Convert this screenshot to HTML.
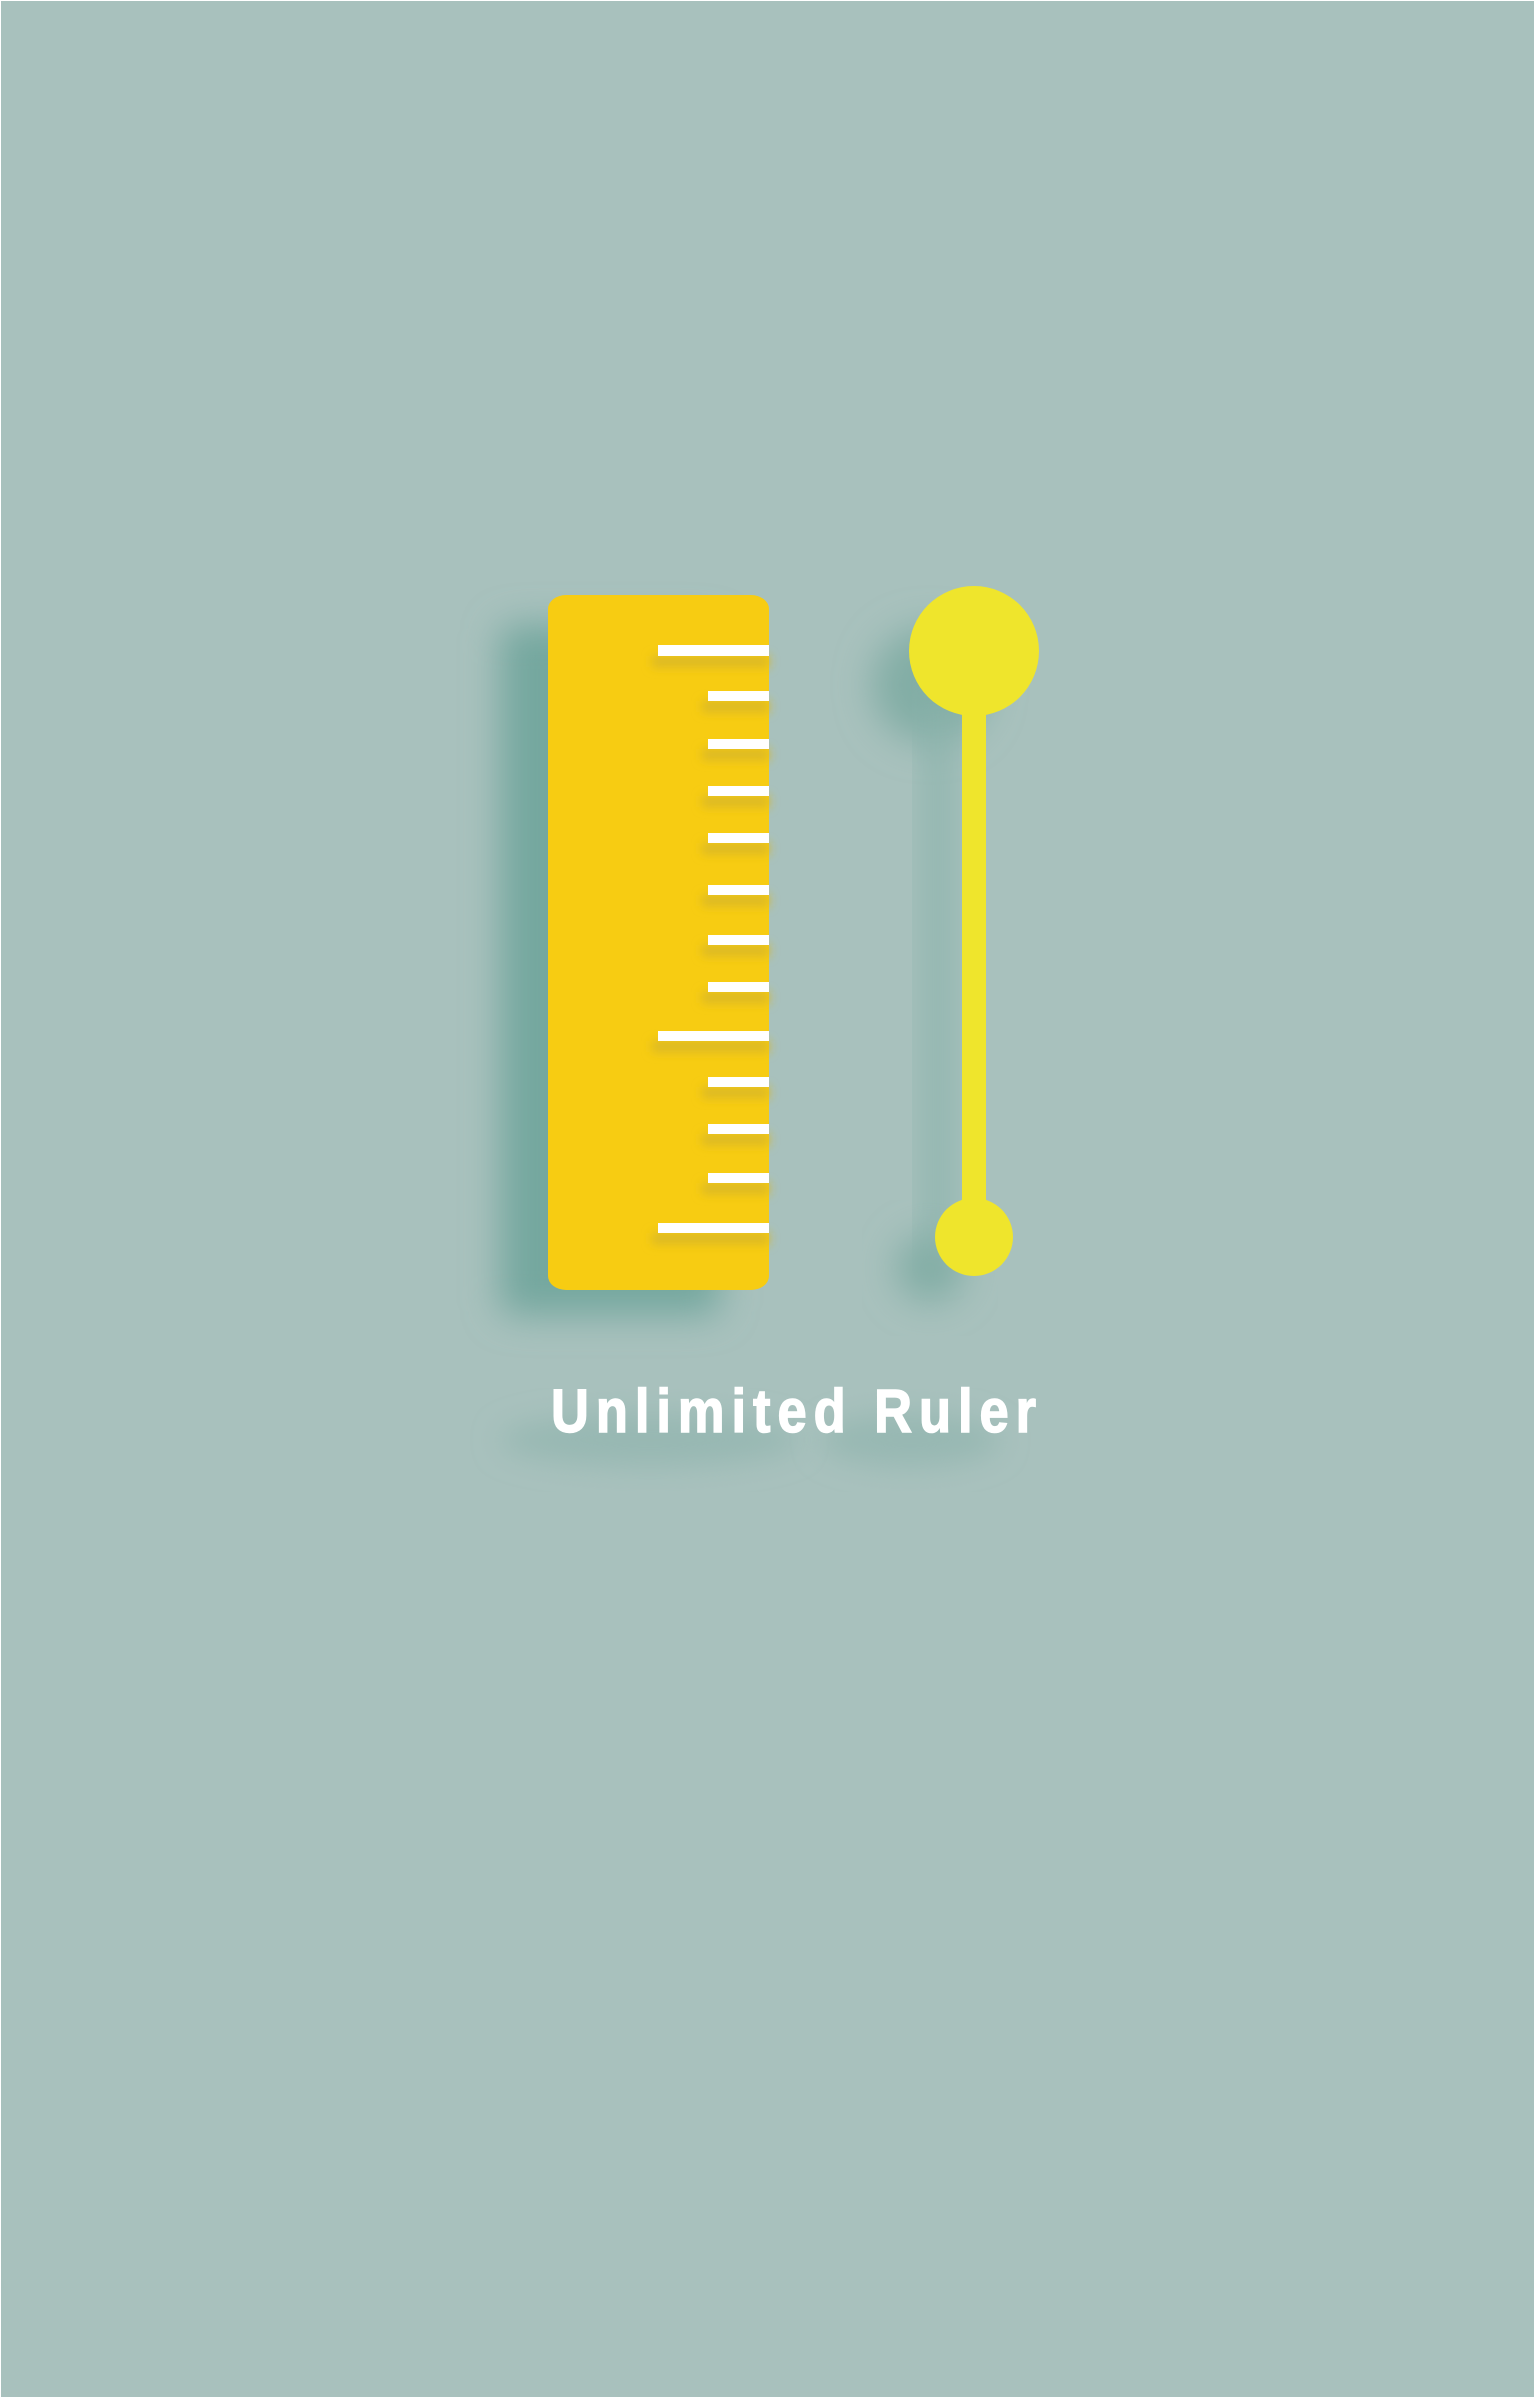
<!DOCTYPE html>
<html><head><meta charset="utf-8"><style>
html,body{margin:0;padding:0}
body{width:1536px;height:2400px;background:#fff;overflow:hidden}
</style></head><body>
<svg width="1536" height="2400" viewBox="0 0 1536 2400" xmlns="http://www.w3.org/2000/svg">
<defs>
<filter id="b1" x="-50%" y="-50%" width="200%" height="200%"><feGaussianBlur stdDeviation="18"/></filter>
<filter id="b2" x="-50%" y="-50%" width="200%" height="200%"><feGaussianBlur stdDeviation="5"/></filter>
<filter id="b3" x="-50%" y="-50%" width="200%" height="200%"><feGaussianBlur stdDeviation="14"/></filter>
</defs>
<rect x="1" y="1" width="1533" height="2396" fill="#a8c1bd"/>
<!-- shadows -->
<rect x="500" y="625" width="220" height="690" rx="14" fill="#74a79f" filter="url(#b1)"/>
<circle cx="930" cy="685" r="58" fill="#82ada5" filter="url(#b1)"/>
<rect x="925" y="700" width="26" height="560" fill="#8ab2ab" filter="url(#b1)"/>
<circle cx="930" cy="1268" r="34" fill="#82ada5" filter="url(#b1)"/>
<ellipse cx="650" cy="1440" rx="150" ry="26" fill="#97b8b2" filter="url(#b3)"/>
<ellipse cx="910" cy="1440" rx="90" ry="26" fill="#97b8b2" filter="url(#b3)"/>
<!-- ruler -->
<rect x="548" y="595" width="221" height="695" rx="18" ry="14" fill="#f7cc12"/>
<g fill="#d9b728" filter="url(#b2)">
<rect x="652" y="656" width="117" height="11"/>
<rect x="702" y="701" width="67" height="11"/>
<rect x="702" y="749" width="67" height="11"/>
<rect x="702" y="796" width="67" height="11"/>
<rect x="702" y="843" width="67" height="11"/>
<rect x="702" y="895" width="67" height="11"/>
<rect x="702" y="945" width="67" height="11"/>
<rect x="702" y="992" width="67" height="11"/>
<rect x="652" y="1041" width="117" height="11"/>
<rect x="702" y="1087" width="67" height="11"/>
<rect x="702" y="1134" width="67" height="11"/>
<rect x="702" y="1183" width="67" height="11"/>
<rect x="652" y="1233" width="117" height="11"/>
</g>
<g fill="#fff">
<rect x="658" y="645" width="111" height="11"/>
<rect x="708" y="691" width="61" height="10"/>
<rect x="708" y="739" width="61" height="10"/>
<rect x="708" y="786" width="61" height="10"/>
<rect x="708" y="833" width="61" height="10"/>
<rect x="708" y="885" width="61" height="10"/>
<rect x="708" y="935" width="61" height="10"/>
<rect x="708" y="982" width="61" height="10"/>
<rect x="658" y="1031" width="111" height="10"/>
<rect x="708" y="1077" width="61" height="10"/>
<rect x="708" y="1124" width="61" height="10"/>
<rect x="708" y="1173" width="61" height="10"/>
<rect x="658" y="1223" width="111" height="10"/>
</g>
<!-- pin -->
<g fill="#efe52c">
<rect x="962" y="680" width="24" height="560"/>
<circle cx="974" cy="651" r="65"/>
<circle cx="974" cy="1237" r="39"/>
</g>
<text transform="translate(551,1432) scale(0.86,1)" x="0" y="0" font-family="Liberation Sans, sans-serif" font-weight="bold" font-size="61" fill="#fff" stroke="#fff" stroke-width="1.5" textLength="564" lengthAdjust="spacing">Unlimited Ruler</text>
</svg>
</body></html>
